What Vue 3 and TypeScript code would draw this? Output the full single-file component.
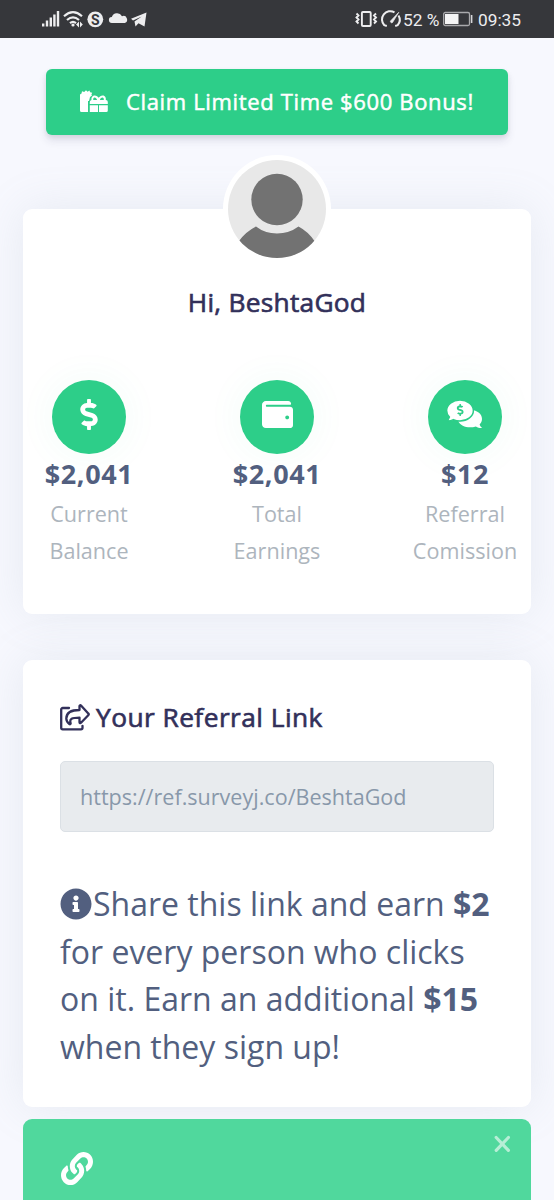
<script setup lang="ts">
interface Stat {
  icon: 'dollar' | 'wallet' | 'comments'
  value: string
  label: [string, string]
}

const stats: Stat[] = [
  { icon: 'dollar', value: '$2,041', label: ['Current', 'Balance'] },
  { icon: 'wallet', value: '$2,041', label: ['Total', 'Earnings'] },
  { icon: 'comments', value: '$12', label: ['Referral', 'Comission'] },
]
</script>

<template>
  <div class="screen">
    <header class="status">
      <svg class="status-left" width="110" height="20" viewBox="0 0 110 20" fill="#ededef">
        <rect x="0" y="14.500" width="2.400" height="3" />
        <rect x="3.800" y="11.500" width="2.400" height="6" />
        <rect x="7.600" y="8.500" width="2.400" height="9" />
        <rect x="11.200" y="5.500" width="2.400" height="12" />
        <rect x="14.800" y="2" width="2.400" height="15.500" />
        <g fill="none" stroke="#ededef" stroke-width="2.200">
          <path d="M22 7.200Q31-.8 40 7.200M25 11Q31 5.800 37 11M28 14.100Q31 11.600 34 14.100" />
        </g>
        <circle cx="31" cy="16" r="1.600" />
        <path d="M34 15.500l3-3v6zM38 12.500l2.800 3-2.800 3z" />
        <circle cx="53.300" cy="10.300" r="7.900" />
        <text x="53.300" y="15.500" text-anchor="middle" class="badge-letter">S</text>
        <path d="M70 14a3 3 0 0 1-.2-6A5.600 5.600 0 0 1 80 7.200 3.500 3.500 0 0 1 82.800 14z" />
        <path d="M89 9.800L104.500 3.500l-2 14-6-3.200-3 3.200-1-5 7.200-5-8.700 4z" />
      </svg>
      <div class="status-right">
        <svg width="48" height="20" viewBox="0 0 48 20" fill="none" stroke="#ededef" stroke-width="1.900">
          <rect x="6.900" y="3" width="8.800" height="14" rx="1" />
          <path d="M1.500 4.500l2 2-2 2 2 2-2 2 2 2M21 4.500l-2 2 2 2-2 2 2 2-2 2" />
          <path d="M31.800 17l-2.500-.8A8.300 8.300 0 0 1 39.500 3.300M43.500 6.500a8.300 8.300 0 0 1-.8 9.700l-2.500.8" stroke-width="2" />
          <path d="M35.500 12l8.300-8.700-6.300 10.200a1.300 1.300 0 0 1-2-1.500z" fill="#ededef" stroke-width=".7" />
        </svg>
        <span class="percent">52 %</span>
        <svg class="battery" width="30" height="16" viewBox="0 0 30 16">
          <rect x=".7" y="1.500" width="25.800" height="13" rx="1.500" fill="none" stroke="#a9a9ac" stroke-width="1.300" />
          <rect x="2" y="3" width="13.500" height="10" fill="#f4f4f5" />
          <rect x="27.800" y="4" width="1.600" height="8" fill="#d5d5d8" />
        </svg>
        <span class="clock">09:35</span>
      </div>
    </header>

    <main class="content">
      <button class="bonus">
        <svg width="29" height="23" viewBox="0 0 29 23" fill="#fff">
          <path d="M1.500 3.500L2 1.300l2.200.8L6 .3l1.600 1.500L9.400.5l.8 1.700 2 .5-.8 1.700.6 1L10 7 9 11H8v11H1.500A1.500 1.500 0 0 1 0 20.500V4.500z" />
          <path fill-rule="evenodd" d="M9.800 14v-2a2 2 0 0 1 1.700-2c-.4-2 .6-4.500 3.200-4.500 1.900 0 3.100 1.200 4 2.300.9-1.100 2.100-2.300 4-2.300 2.600 0 3.500 2.500 3.100 4.500a2 2 0 0 1 2 2v2zM13.300 9.900h3.800c-.5-1.300-1.300-2.300-2.500-2.300-1 0-1.600 1-1.300 2.300zm6.600 0h3.900c.2-1.300-.3-2.300-1.400-2.300-1.200 0-2 .9-2.500 2.300z" />
          <path d="M9.800 15.200H18V22H9.800zM19 15.200h8.800v5.300a1.500 1.500 0 0 1-1.500 1.500H19z" />
        </svg>
        <span>Claim Limited Time $600 Bonus!</span>
      </button>

      <section class="card profile">
        <svg class="avatar" width="108" height="108" viewBox="0 0 108 108">
          <defs><clipPath id="avatar-clip"><circle cx="54" cy="54" r="49" /></clipPath></defs>
          <circle cx="54" cy="54" r="54" fill="#fff" />
          <circle cx="54" cy="54" r="49" fill="#e8e8e8" />
          <circle cx="54" cy="44.500" r="25.700" fill="#727272" />
          <path clip-path="url(#avatar-clip)" fill="#727272" d="M33 71.500Q42 78.500 54 78.500T75.500 71.500Q85 76.500 91.500 86L90 108H16V86Q23 76.500 33 71.500z" />
        </svg>
        <h2>Hi, BeshtaGod</h2>
        <div class="stats">
          <div v-for="s in stats" :key="s.label[0]" class="stat">
            <div class="stat-icon">
              <svg v-if="s.icon === 'dollar'" width="18" height="31" viewBox="0 0 288 512" fill="#fff">
                <path d="M209.200 233.400l-108-31.600C88.700 198.200 80 186.500 80 173.500c0-16.300 13.200-29.500 29.500-29.500h66.300c12.200 0 24.200 3.700 34.200 10.500 6.100 4.100 14.300 3.100 19.500-2l34.800-34c7.100-6.900 6.100-18.400-1.800-24.500C238 74.800 207.400 64.100 176 64V16c0-8.800-7.200-16-16-16h-32c-8.800 0-16 7.200-16 16v48h-2.500C45.800 64-5.400 118.700.5 183.600c4.200 46.100 39.400 83.600 83.800 96.600l102.500 30c12.500 3.700 21.200 15.300 21.200 28.300 0 16.300-13.200 29.500-29.500 29.500h-66.300C100 368 88 364.300 78 357.500c-6.100-4.100-14.300-3.100-19.500 2l-34.800 34c-7.100 6.900-6.100 18.400 1.800 24.500 24.500 19.200 55.100 29.900 86.500 30v48c0 8.800 7.200 16 16 16h32c8.800 0 16-7.200 16-16v-48.200c46.600-.9 90.300-28.600 105.700-72.700 21.500-61.600-14.600-124.800-72.500-141.700z" />
              </svg>
              <svg v-else-if="s.icon === 'wallet'" width="31" height="31" viewBox="0 0 512 512" fill="#fff">
                <path d="M461.200 128H80c-8.840 0-16-7.160-16-16s7.160-16 16-16h384c8.840 0 16-7.160 16-16 0-26.510-21.490-48-48-48H64C28.650 32 0 60.650 0 96v320c0 35.350 28.650 64 64 64h397.200c28.020 0 50.800-21.530 50.800-48V176c0-26.470-22.780-48-50.800-48zM416 336c-17.670 0-32-14.330-32-32s14.330-32 32-32 32 14.330 32 32-14.330 32-32 32z" />
              </svg>
              <svg v-else width="36" height="29" viewBox="0 0 36 29">
                <path fill="#fff" d="M23 9.800c7 .2 12 4 12 9.200 0 2.300-.9 4-2.400 5.500.5 1.500 1.300 2.500 2.600 3.500-2.300.2-4.400-.5-6.300-1.600-7 2.300-15.300.2-17.700-5.100 7.700.5 14.500-4.300 11.800-11.500z" />
                <path fill="#fff" stroke="#2dce89" stroke-width="1.500" d="M13 0c7.400 0 13.400 4.700 13.400 10.500S20.400 21 13 21c-2.400 0-4.700-.5-6.600-1.300C4.400 20.700 2.200 21.300-.3 21c1.300-1 2.200-2.300 2.700-3.900C.7 15.300-.4 13-.4 10.500-.4 4.700 5.600 0 13 0z" />
                <g transform="translate(9.800 4) scale(.0235)">
                  <path fill="#2dce89" d="M209.200 233.400l-108-31.600C88.700 198.200 80 186.500 80 173.500c0-16.300 13.200-29.500 29.500-29.500h66.300c12.200 0 24.200 3.700 34.200 10.500 6.100 4.100 14.300 3.100 19.500-2l34.800-34c7.100-6.900 6.100-18.400-1.800-24.500C238 74.800 207.400 64.100 176 64V16c0-8.800-7.200-16-16-16h-32c-8.800 0-16 7.200-16 16v48h-2.500C45.800 64-5.400 118.700.5 183.600c4.200 46.100 39.400 83.600 83.800 96.600l102.500 30c12.500 3.700 21.200 15.300 21.200 28.300 0 16.300-13.200 29.500-29.500 29.500h-66.300C100 368 88 364.300 78 357.500c-6.100-4.100-14.300-3.100-19.500 2l-34.800 34c-7.100 6.900-6.100 18.400 1.800 24.500 24.500 19.200 55.100 29.900 86.500 30v48c0 8.800 7.200 16 16 16h32c8.800 0 16-7.200 16-16v-48.200c46.600-.9 90.300-28.600 105.700-72.700 21.500-61.600-14.600-124.800-72.500-141.700z" />
                </g>
              </svg>
            </div>
            <strong>{{ s.value }}</strong>
            <span>{{ s.label[0] }}</span>
            <span>{{ s.label[1] }}</span>
          </div>
        </div>
      </section>

      <section class="card referral">
        <h3>
          <svg width="30" height="27" viewBox="0 0 30 27" fill="none" stroke="#32305a" stroke-width="2.300" stroke-linejoin="round" stroke-linecap="round">
            <path d="M9 4H2.700A1.500 1.500 0 0 0 1.200 5.500v18.300a1.500 1.500 0 0 0 1.500 1.500H21a1.500 1.500 0 0 0 1.500-1.500V21.800" />
            <path d="M19.500 2v4C12 6 6.300 8 6.300 14.500c0 2.600 1.400 4.300 3.100 5.500.7.500 1.400 0 1.200-.8-1.400-4.400 1.200-5.500 8.900-5.600v4.600c0 .9.900 1.200 1.500.6l7.500-7.800a.9.900 0 0 0 0-1.300L21 1.500c-.6-.6-1.500-.3-1.500.5z" />
          </svg>
          <span>Your Referral Link</span>
        </h3>
        <div class="link-field">https://ref.surveyj.co/BeshtaGod</div>
        <p class="share">
          <svg class="info" width="32" height="32" viewBox="0 0 512 512" fill="#525f7f">
            <path d="M256 8C119.043 8 8 119.083 8 256c0 136.997 111.043 248 248 248s248-111.003 248-248C504 119.083 392.957 8 256 8zm0 110c23.196 0 42 18.804 42 42s-18.804 42-42 42-42-18.804-42-42 18.804-42 42-42zm56 254c0 6.627-5.373 12-12 12h-88c-6.627 0-12-5.373-12-12v-24c0-6.627 5.373-12 12-12h12v-64h-12c-6.627 0-12-5.373-12-12v-24c0-6.627 5.373-12 12-12h64c6.627 0 12 5.373 12 12v100h12c6.627 0 12 5.373 12 12v24z" />
          </svg>Share this link and earn <b>$2</b><br>for every person who clicks<br>on it. Earn an additional <b>$15</b><br>when they sign up!
        </p>
      </section>

      <section class="alert">
        <svg class="link" width="32" height="33" viewBox="0 0 512 512" preserveAspectRatio="none" fill="#fff">
          <path d="M326.612 185.391c59.747 59.809 58.927 155.698.36 214.590-.11.120-.24.250-.36.370l-67.200 67.200c-59.270 59.270-155.699 59.262-214.960 0-59.270-59.260-59.270-155.700 0-214.960l37.106-37.106c9.840-9.840 26.786-3.300 27.294 10.606.648 17.722 3.826 35.527 9.690 52.721 1.986 5.822.567 12.262-3.783 16.612l-13.087 13.087c-28.026 28.026-28.905 73.660-1.155 101.960 28.024 28.579 74.086 28.749 102.325.510l67.200-67.190c28.191-28.191 28.073-73.757 0-101.830-3.701-3.694-7.429-6.564-10.341-8.569a16.037 16.037 0 0 1-6.947-12.606c-.396-10.567 3.348-21.456 11.698-29.806l21.054-21.055c5.521-5.521 14.182-6.199 20.584-1.731a152.482 152.482 0 0 1 20.522 17.197zM467.547 44.449c-59.261-59.262-155.690-59.270-214.960 0l-67.200 67.200c-.120.120-.250.250-.360.370-58.566 58.892-59.387 154.781.360 214.590a152.454 152.454 0 0 0 20.521 17.196c6.402 4.468 15.064 3.789 20.584-1.731l21.054-21.055c8.350-8.350 12.094-19.239 11.698-29.806a16.037 16.037 0 0 0-6.947-12.606c-2.912-2.005-6.640-4.875-10.341-8.569-28.073-28.073-28.191-73.639 0-101.830l67.200-67.190c28.239-28.239 74.300-28.069 102.325.510 27.750 28.300 26.872 73.934-1.155 101.960l-13.087 13.087c-4.350 4.350-5.769 10.790-3.783 16.612 5.864 17.194 9.042 34.999 9.690 52.721.509 13.906 17.454 20.446 27.294 10.606l37.106-37.106c59.271-59.259 59.271-155.699.001-214.959z" />
        </svg>
        <svg class="close" width="17" height="18" viewBox="0 0 17 18" stroke="#b7eed6" stroke-width="3.200" stroke-linecap="round">
          <path d="M2.200 2.500l12.200 12.800M14.400 2.500L2.200 15.300" />
        </svg>
      </section>
    </main>
  </div>
</template>

<style>
body {
  margin: 0;
  background: #f5f6fc;
}
</style>

<style scoped>
* {
  box-sizing: border-box;
}
.screen {
  width: 554px;
  height: 1200px;
  overflow: hidden;
  background: #f7f8fe;
  font-family: "Open Sans", "Noto Sans", sans-serif;
}
.status {
  height: 38px;
  display: flex;
  justify-content: space-between;
  align-items: center;
  padding: 0 33px 0 42px;
  background: #36373b;
  color: #ededef;
  font-family: Roboto, sans-serif;
}
.badge-letter {
  font: 700 14px Roboto, sans-serif;
  fill: #36373b;
}
.status-right {
  display: flex;
  align-items: center;
  font-size: 17.300px;
  line-height: 38px;
  white-space: nowrap;
}
.status-right span {
  padding-top: 1px;
}
.percent {
  width: 40px;
}
.battery {
  margin-right: 5px;
}
.clock {
  width: 43px;
}
.content {
  display: flex;
  flex-direction: column;
  padding: 31px 23px 0;
}
.bonus {
  display: flex;
  align-items: center;
  height: 66px;
  margin: 0 23px;
  padding: 0 0 1px 34px;
  gap: 17px;
  border: 0;
  border-radius: 6px;
  background: #2dce89;
  color: #fff;
  font: 400 22px "Open Sans", sans-serif;
  letter-spacing: 0.65px;
  -webkit-text-stroke: 0.5px currentColor;
  white-space: nowrap;
  box-shadow: 0 6px 9px rgba(50, 50, 93, 0.11), 0 2px 5px rgba(0, 0, 0, 0.08);
}
.bonus span {
  padding-bottom: 2px;
}
.card {
  background: #fff;
  border-radius: 9px;
  box-shadow: 0 0 46px rgba(136, 152, 170, 0.15);
}
.profile {
  height: 405px;
  margin-top: 74px;
  display: flex;
  flex-direction: column;
  align-items: center;
}
.avatar {
  margin-top: -54px;
  flex: none;
}
h2,
h3 {
  margin: 0;
  color: #32305a;
  font-weight: 400;
  -webkit-text-stroke: 0.65px currentColor;
}
h2 {
  margin-top: 21px;
  font-size: 26.300px;
  line-height: 36px;
  letter-spacing: 0.250px;
}
.stats {
  display: flex;
  justify-content: space-between;
  width: 488px;
  margin-top: 60px;
}
.stat {
  width: 112px;
  display: flex;
  flex-direction: column;
  align-items: center;
  font-size: 21.600px;
  line-height: 37px;
  color: #adb5bd;
}
.stat-icon {
  width: 74px;
  height: 74px;
  display: flex;
  align-items: center;
  justify-content: center;
  padding-bottom: 5px;
  border-radius: 50%;
  background: #2dce89;
  box-shadow: 0 0 40px rgba(45, 206, 137, 0.06);
}
.stat strong {
  margin-bottom: 2px;
  font-size: 27px;
  line-height: 39px;
  letter-spacing: 0.600px;
  color: #525f7f;
}
.referral {
  height: 447px;
  margin-top: 46px;
  padding: 37px;
}
h3 {
  display: flex;
  align-items: center;
  gap: 6px;
  height: 40px;
  font-size: 26.300px;
  letter-spacing: 0.450px;
}
.link-field {
  height: 71px;
  margin-top: 24px;
  padding: 0 19px;
  border: 1px solid #dbe0e5;
  border-radius: 5px;
  background: #e8ebee;
  color: #8898aa;
  font-size: 21.550px;
  line-height: 69px;
}
.share {
  margin: 48px 0 0;
  color: #525f7f;
  font-size: 32px;
  line-height: 47.700px;
  white-space: nowrap;
}
.info {
  vertical-align: -4px;
  margin-right: 1px;
}
.alert {
  height: 90px;
  margin-top: 12px;
  padding: 16px 20px 0 38px;
  display: flex;
  justify-content: space-between;
  align-items: flex-start;
  border-radius: 9px;
  background: #50d89d;
}
.link {
  margin-top: 17px;
}
</style>
